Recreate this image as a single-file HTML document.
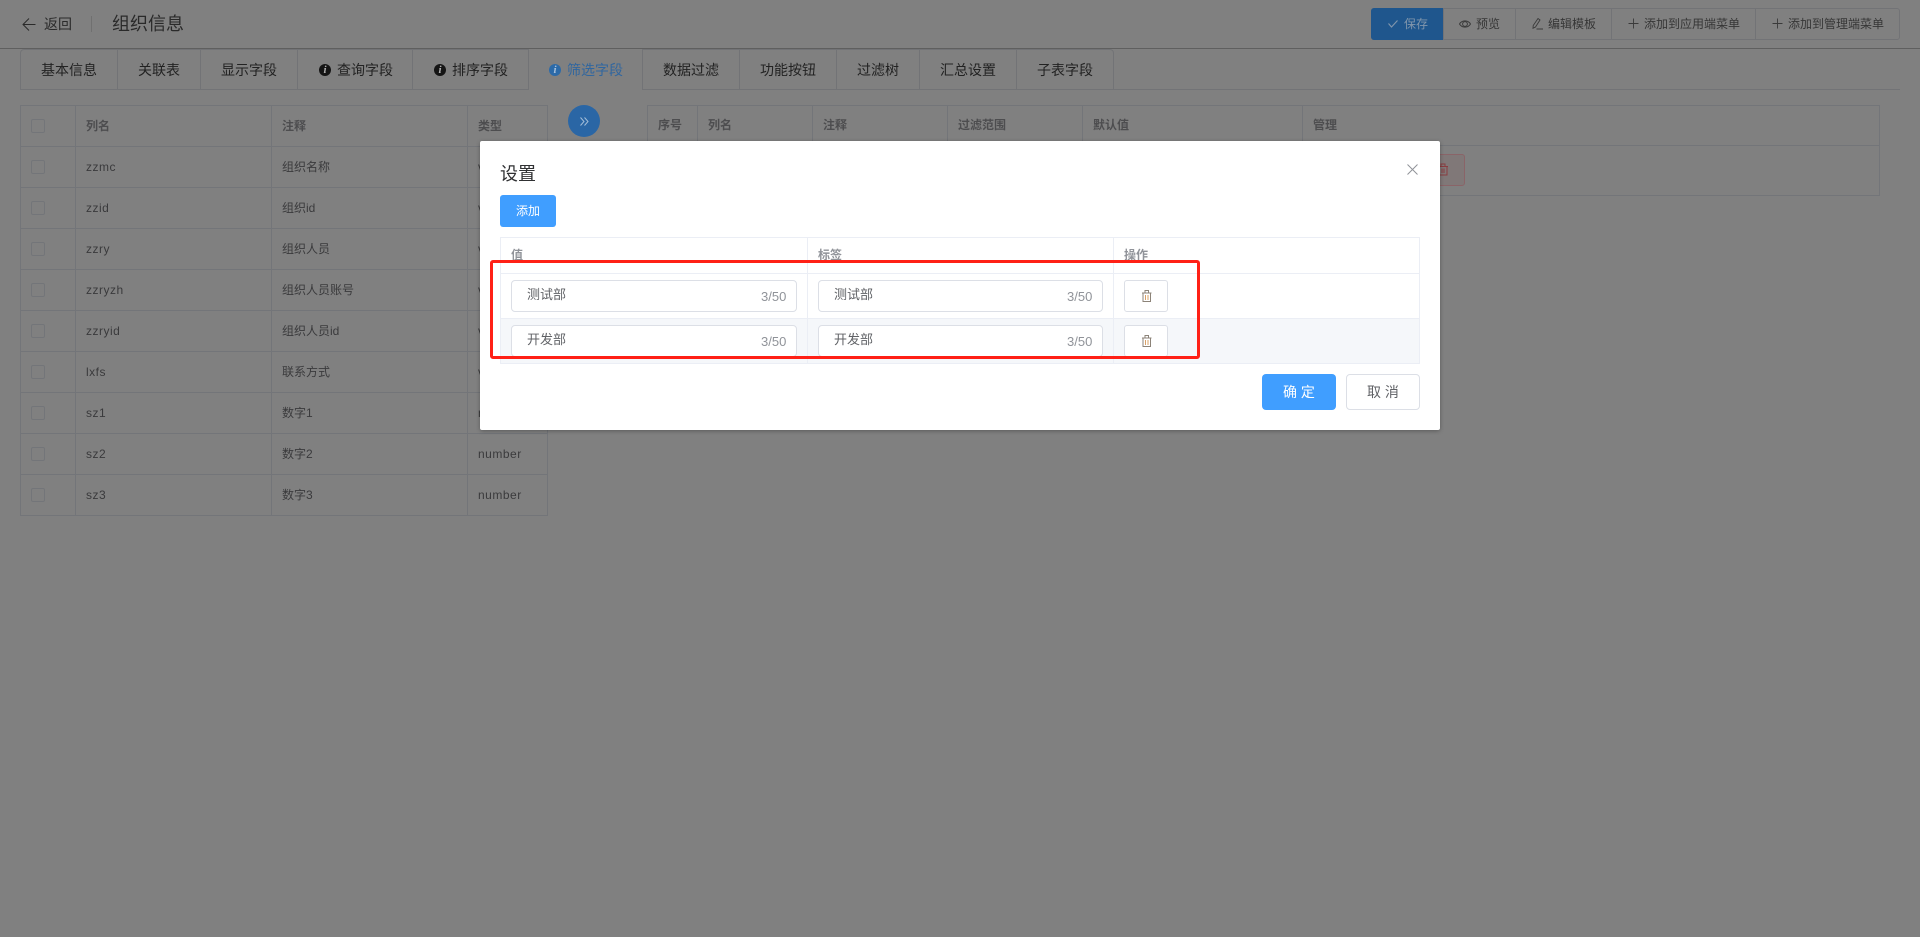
<!DOCTYPE html>
<html lang="zh-CN">
<head>
<meta charset="utf-8">
<title>组织信息</title>
<style>
*{box-sizing:border-box;margin:0;padding:0}
html,body{width:1920px;height:937px;overflow:hidden;background:#808080}
body{position:relative;font-family:"Liberation Sans","Noto Sans CJK SC",sans-serif;font-size:12px;color:#3a3a3c}
.a{position:absolute}
.t{position:absolute;white-space:nowrap;line-height:20px;height:20px}
svg{position:absolute;overflow:visible;fill:none}
.hl{position:absolute;left:0;top:48px;width:1920px;height:1px;background:#5f5f5f}
.btns{position:absolute;left:1371px;top:8px;width:529px;height:32px;border:1px solid #727376;border-radius:3px}
.btns i{position:absolute;top:0;width:1px;height:30px;background:#727376}
.save{position:absolute;left:1371px;top:8px;width:72px;height:32px;background:#1f568d;border-radius:3px 0 0 3px}
.tabline{position:absolute;left:20px;top:89px;width:1880px;height:1px;background:#727376}
.tab{position:absolute;top:49px;height:41px;border:1px solid #727376;border-left-width:0}
.tt{position:absolute;top:60px;font-size:14px;line-height:20px;color:#222;white-space:nowrap}
.ic{position:absolute;top:64px;width:12px;height:12px;border-radius:50%;background:#151515;color:#b0b0b0;font:italic bold 11px/12px "Liberation Serif",serif;text-align:center}
table{position:absolute;border-collapse:collapse;table-layout:fixed;border:1px solid #737579}
td,th{border:1px solid #737579;padding:0 0 0 10px;font-weight:normal;text-align:left;font-size:12px;white-space:nowrap;overflow:hidden}
th{color:#4d4d4f;font-weight:bold;padding-bottom:2px}
td{color:#3a3a3c}
.lt td:nth-child(3){padding-bottom:2px}
.lt td:first-child,.lt th:first-child{padding-bottom:0}
.cb{display:block;width:14px;height:14px;border:1px solid #737579;border-radius:2px}
.lt tr{height:41px}
.num{letter-spacing:.5px}
.dlg{position:absolute;left:480px;top:141px;width:960px;height:289px;background:#fff;border-radius:2px;box-shadow:0 1px 4px rgba(0,0,0,.3)}
.l{position:absolute;background:#ebeef5}
.inp{position:absolute;height:32px;border:1px solid #dcdfe6;border-radius:4px;background:#fff}
.v{color:#606266;font-size:13px}
.c{color:#909399;font-size:13px}
.h{color:#909399;font-size:12px;font-weight:bold}
.del{position:absolute;width:44px;height:32px;border:1px solid #dcdfe6;border-radius:3px;background:#fff}
.red{position:absolute;left:490px;top:260px;width:710px;height:99px;border:3px solid #ff2016;border-radius:3px}
</style>
</head>
<body>
<!-- header -->
<svg style="left:0;top:0" width="60" height="48"><path d="M29 18.500L23 24.500L29 30.500M23 24.500H35.500" stroke="#2a2a2a" stroke-width="1"/></svg>
<div class="t" style="left:44px;top:14px;font-size:14px;color:#2a2a2a">返回</div>
<div class="a" style="left:91px;top:16px;width:1px;height:16px;background:#707070"></div>
<div class="t" style="left:112px;top:14px;font-size:18px;color:#2a2a2a">组织信息</div>

<div class="btns"><i style="left:71px"></i><i style="left:143px"></i><i style="left:239px"></i><i style="left:383px"></i></div>
<div class="save"></div>
<svg style="left:1388px;top:18px" width="12" height="12"><path d="M0.500 5.500L3.500 9L9.500 2.500" stroke="#8196ac" stroke-width="1.100"/></svg>
<div class="t" style="left:1404px;top:14px;color:#8196ac">保存</div>
<svg style="left:1459px;top:18px" width="12" height="12"><path d="M0.500 6C3 1.800 9 1.800 11.500 6C9 10.200 3 10.200 0.500 6Z" stroke="#3a3a3a"/><circle cx="6" cy="6" r="2.400" stroke="#3a3a3a"/></svg>
<div class="t" style="left:1476px;top:14px;color:#363636">预览</div>
<svg style="left:1532px;top:18px" width="12" height="12"><path d="M6 .5L8 2L3.500 9L1 10.200L1.200 7.500ZM4.500 11H11" stroke="#3a3a3a" stroke-width=".9"/></svg>
<div class="t" style="left:1548px;top:14px;color:#363636">编辑模板</div>
<svg style="left:1628px;top:18px" width="11" height="11"><path d="M5.500 0.500V10.500M0.500 5.500H10.500" stroke="#3a3a3a" stroke-width=".9"/></svg>
<div class="t" style="left:1644px;top:14px;color:#363636">添加到应用端菜单</div>
<svg style="left:1772px;top:18px" width="11" height="11"><path d="M5.500 0.500V10.500M0.500 5.500H10.500" stroke="#3a3a3a" stroke-width=".9"/></svg>
<div class="t" style="left:1788px;top:14px;color:#363636">添加到管理端菜单</div>
<div class="hl"></div>

<!-- tabs -->
<div class="tabline"></div>
<div class="tab" style="left:20px;width:98px;border-left-width:1px;border-radius:4px 0 0 0"></div>
<div class="tab" style="left:118px;width:83px"></div>
<div class="tab" style="left:201px;width:97px"></div>
<div class="tab" style="left:298px;width:115px"></div>
<div class="tab" style="left:413px;width:116px"></div>
<div class="a" style="left:529px;top:49px;width:113px;height:41px;background:#808080"></div>
<div class="tab" style="left:642px;width:98px;border-left-width:1px"></div>
<div class="tab" style="left:740px;width:97px"></div>
<div class="tab" style="left:837px;width:83px"></div>
<div class="tab" style="left:920px;width:97px"></div>
<div class="tab" style="left:1017px;width:97px;border-radius:0 4px 0 0"></div>
<div class="tt" style="left:41px">基本信息</div>
<div class="tt" style="left:138px">关联表</div>
<div class="tt" style="left:221px">显示字段</div>
<div class="ic" style="left:319px">i</div><div class="tt" style="left:337px">查询字段</div>
<div class="ic" style="left:434px">i</div><div class="tt" style="left:452px">排序字段</div>
<div class="ic" style="left:549px;background:#2c6aa8;color:#a8c0da">i</div><div class="tt" style="left:567px;color:#30669f">筛选字段</div>
<div class="tt" style="left:663px">数据过滤</div>
<div class="tt" style="left:760px">功能按钮</div>
<div class="tt" style="left:857px">过滤树</div>
<div class="tt" style="left:940px">汇总设置</div>
<div class="tt" style="left:1037px">子表字段</div>

<!-- left table -->
<table class="lt" style="left:20px;top:105px;width:527px">
<colgroup><col style="width:55px"><col style="width:196px"><col style="width:196px"><col style="width:80px"></colgroup>
<tr><th><span class="cb"></span></th><th>列名</th><th>注释</th><th>类型</th></tr>
<tr><td><span class="cb"></span></td><td class="num">zzmc</td><td>组织名称</td><td class="num">varchar</td></tr>
<tr><td><span class="cb"></span></td><td class="num">zzid</td><td>组织id</td><td class="num">varchar</td></tr>
<tr><td><span class="cb"></span></td><td class="num">zzry</td><td>组织人员</td><td class="num">varchar</td></tr>
<tr><td><span class="cb"></span></td><td class="num">zzryzh</td><td>组织人员账号</td><td class="num">varchar</td></tr>
<tr><td><span class="cb"></span></td><td class="num">zzryid</td><td>组织人员id</td><td class="num">varchar</td></tr>
<tr><td><span class="cb"></span></td><td class="num">lxfs</td><td>联系方式</td><td class="num">varchar</td></tr>
<tr><td><span class="cb"></span></td><td class="num">sz1</td><td>数字1</td><td class="num">number</td></tr>
<tr><td><span class="cb"></span></td><td class="num">sz2</td><td>数字2</td><td class="num">number</td></tr>
<tr><td><span class="cb"></span></td><td class="num">sz3</td><td>数字3</td><td class="num">number</td></tr>
</table>

<!-- transfer circle -->
<div class="a" style="left:568px;top:105px;width:32px;height:32px;border-radius:50%;background:#2a66a5"></div>
<svg style="left:580px;top:117px" width="9" height="9"><path d="M.5 .5L4 4.500L.5 8.500M4.500 .5L8 4.500L4.500 8.500" stroke="#a3bdd8"/></svg>

<!-- right table -->
<table style="left:647px;top:105px;width:1233px">
<colgroup><col style="width:50px"><col style="width:115px"><col style="width:135px"><col style="width:135px"><col style="width:220px"><col></colgroup>
<tr style="height:40px"><th>序号</th><th>列名</th><th>注释</th><th>过滤范围</th><th>默认值</th><th>管理</th></tr>
<tr style="height:50px"><td></td><td></td><td></td><td></td><td></td><td></td></tr>
</table>
<div class="a" style="left:1400px;top:154px;width:65px;height:32px;border:1px solid #8a6468;border-radius:3px;background:#807878"></div>
<svg style="left:1438px;top:163px" width="10" height="13"><path d="M0 3.500H10M3 3.500V1H7V3.500M1 3.500V12H9V3.500M4 5.500V10M6 5.500V10" stroke="#8a3c40"/></svg>

<!-- dialog -->
<div class="dlg"></div>
<div class="t" style="left:500px;top:164px;font-size:18px;color:#303133;height:20px">设置</div>
<svg style="left:1407px;top:164px" width="11" height="11"><path d="M.5 .5L10.500 10.500M10.500 .5L.5 10.500" stroke="#909399"/></svg>
<div class="a" style="left:500px;top:195px;width:56px;height:32px;background:#409eff;border-radius:3px;color:#fff;text-align:center;line-height:32px">添加</div>

<div class="a" style="left:501px;top:319px;width:918px;height:44px;background:#f5f7fa"></div>
<div class="l" style="left:500px;top:237px;width:920px;height:1px"></div>
<div class="l" style="left:500px;top:273px;width:920px;height:1px"></div>
<div class="l" style="left:500px;top:318px;width:920px;height:1px"></div>
<div class="l" style="left:500px;top:363px;width:920px;height:1px"></div>
<div class="l" style="left:500px;top:237px;width:1px;height:127px"></div>
<div class="l" style="left:807px;top:237px;width:1px;height:127px"></div>
<div class="l" style="left:1113px;top:237px;width:1px;height:127px"></div>
<div class="l" style="left:1419px;top:237px;width:1px;height:127px"></div>

<div class="t h" style="left:511px;top:245px">值</div>
<div class="t h" style="left:818px;top:245px">标签</div>
<div class="t h" style="left:1124px;top:245px">操作</div>

<div class="inp" style="left:511px;top:280px;width:286px"></div>
<div class="t v" style="left:527px;top:285px">测试部</div>
<div class="t c" style="left:761px;top:287px">3/50</div>
<div class="inp" style="left:818px;top:280px;width:285px"></div>
<div class="t v" style="left:834px;top:285px">测试部</div>
<div class="t c" style="left:1067px;top:287px">3/50</div>
<div class="del" style="left:1124px;top:280px"></div>
<svg style="left:1141.500px;top:289.500px" width="10" height="13"><path d="M0 3H9.500M3 3V.5H6.500V3M1 3V11.500H8.500V3" stroke="#8c8378"/><path d="M3.500 5V10M6 5V10" stroke="#d9a066"/></svg>

<div class="inp" style="left:511px;top:325px;width:286px"></div>
<div class="t v" style="left:527px;top:330px">开发部</div>
<div class="t c" style="left:761px;top:332px">3/50</div>
<div class="inp" style="left:818px;top:325px;width:285px"></div>
<div class="t v" style="left:834px;top:330px">开发部</div>
<div class="t c" style="left:1067px;top:332px">3/50</div>
<div class="del" style="left:1124px;top:325px"></div>
<svg style="left:1141.500px;top:334.500px" width="10" height="13"><path d="M0 3H9.500M3 3V.5H6.500V3M1 3V11.500H8.500V3" stroke="#8c8378"/><path d="M3.500 5V10M6 5V10" stroke="#d9a066"/></svg>

<div class="red"></div>

<div class="a" style="left:1262px;top:374px;width:74px;height:36px;background:#409eff;border-radius:4px;color:#fff;font-size:14px;line-height:36px;text-align:center;white-space:pre">确 定</div>
<div class="a" style="left:1346px;top:374px;width:74px;height:36px;background:#fff;border:1px solid #dcdfe6;border-radius:4px;color:#606266;font-size:14px;line-height:34px;text-align:center;white-space:pre">取 消</div>
</body>
</html>
